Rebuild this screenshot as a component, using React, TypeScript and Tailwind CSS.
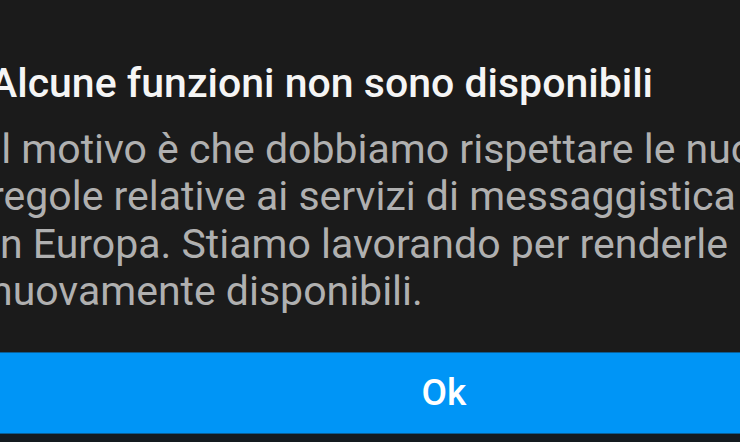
export default function App() {
  return (
    <div className="w-[740px] h-[442px] overflow-hidden bg-[#1b1b1b] font-['Roboto',sans-serif]">
      <div className="w-[908px] -ml-[10px] flex flex-col">
        {/* Title */}
        <h2 className="pt-[59px] text-[41px] leading-[48px] font-medium text-[#f5f5f5] whitespace-nowrap">
          Alcune funzioni non sono disponibili
        </h2>

        {/* Body */}
        <p className="mt-[19px] text-[41px] leading-[47.3px] text-[#b0b0b0] whitespace-nowrap">
          Il motivo è che dobbiamo rispettare le nuove
          <br />
          regole relative ai servizi di messaggistica
          <br />
          in Europa. Stiamo lavorando per renderle
          <br />
          nuovamente disponibili.
        </p>

        {/* Action */}
        <button className="mt-[37px] h-[82px] w-full bg-[#0095f6] border-y border-[#0a5e96] text-[37px] font-medium text-white">
          Ok
        </button>
        <div className="h-[20px] bg-[#141a1f]" />
      </div>
    </div>
  );
}
